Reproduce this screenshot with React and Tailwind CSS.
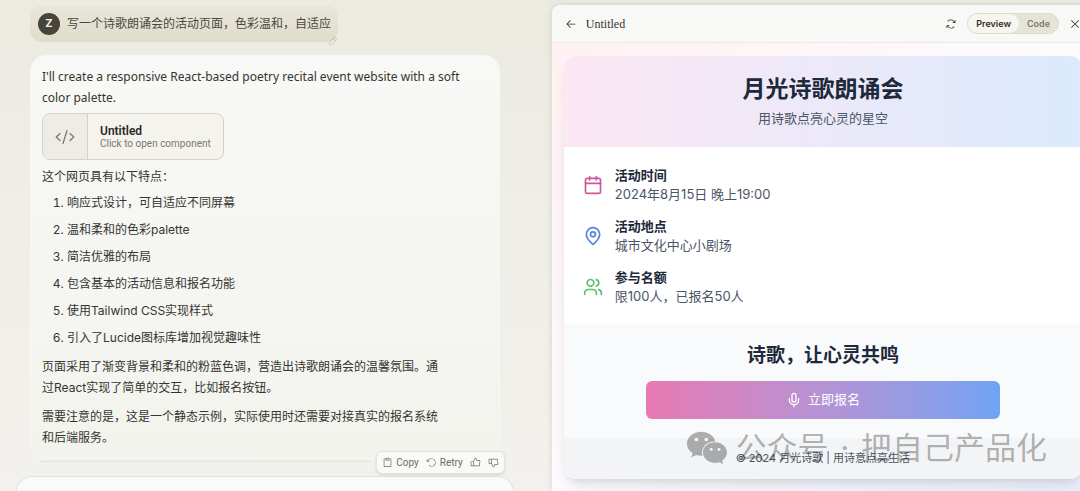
import React, { useState } from "react";
import { Calendar, MapPin, Mic, Users } from "lucide-react";
import {
  PiArrowLeft,
  PiArrowsClockwise,
  PiArrowCounterClockwise,
  PiClipboard,
  PiPencilSimple,
  PiThumbsUp,
  PiThumbsDown,
  PiX,
} from "react-icons/pi";
import { FaWeixin } from "react-icons/fa6";

const features = [
  "响应式设计，可自适应不同屏幕",
  "温和柔和的色彩palette",
  "简洁优雅的布局",
  "包含基本的活动信息和报名功能",
  "使用Tailwind CSS实现样式",
  "引入了Lucide图标库增加视觉趣味性",
];

const details = [
  {
    icon: Calendar,
    color: "text-[#d0579a]",
    title: "活动时间",
    value: "2024年8月15日 晚上19:00",
  },
  {
    icon: MapPin,
    color: "text-[#5585e0]",
    title: "活动地点",
    value: "城市文化中心小剧场",
  },
  {
    icon: Users,
    color: "text-[#5cc168]",
    title: "参与名额",
    value: "限100人，已报名50人",
  },
];

function UserMessage() {
  return (
    <div className="relative flex items-center gap-[7px] self-start rounded-xl bg-gradient-to-b from-[#e9e7db] to-[#dfdccb] py-[7px] pr-[7px] pl-2 text-[#4a493f]">
      <span className="flex size-[22px] items-center justify-center rounded-full bg-[#47443a] text-[11px] font-bold text-[#f5f3ea]">
        Z
      </span>
      <p className="text-[12px] leading-[23px]">
        写一个诗歌朗诵会的活动页面，色彩温和，自适应
      </p>
      <button
        type="button"
        aria-label="Edit"
        className="absolute right-0 -bottom-1 text-[#c4c1b3]"
      >
        <PiPencilSimple size={10} />
      </button>
    </div>
  );
}

function ComponentCard() {
  return (
    <button
      type="button"
      className="mt-[5px] mb-[6px] flex h-[47px] overflow-hidden rounded-lg border border-[#d3d1c9] bg-[#f4f3ee] text-left"
    >
      <span className="flex w-[45px] items-center justify-center self-stretch border-r border-[#d3d1c9] bg-[#eeece4] text-[#77756d]">
        <svg
          viewBox="0 0 20 16"
          className="w-5"
          fill="none"
          stroke="currentColor"
          strokeWidth="1.2"
          strokeLinecap="round"
          strokeLinejoin="round"
        >
          <path d="M5 4.5 1.2 8 5 11.5M15 4.5 18.8 8 15 11.5M12 1.5 8 14.5" />
        </svg>
      </span>
      <span className="flex flex-col justify-center self-stretch px-3 font-[Roboto,sans-serif]">
        <span className="text-[12px] leading-[14px] font-semibold text-[#2b2a26]">
          Untitled
        </span>
        <span className="text-[10px] leading-[12px] text-[#7a7971]">
          Click to open component
        </span>
      </span>
    </button>
  );
}

function AssistantMessage() {
  return (
    <div className="relative mt-[13px] rounded-2xl border border-[#f8f7f3] bg-gradient-to-b from-[#f8f8f6] to-[#f3f3ee] px-[11px] py-[10px] text-[12px] leading-[21px] text-[#35352f]">
      <p className="font-['Noto_Sans',sans-serif]">
        I'll create a responsive React-based poetry recital event website with a
        soft
        <br />
        color palette.
      </p>
      <ComponentCard />
      <p>这个网页具有以下特点：</p>
      <ol className="mt-[5px] list-decimal space-y-[6px] pl-[25px]">
        {features.map((f) => (
          <li key={f}>{f}</li>
        ))}
      </ol>
      <p className="mt-2">
        页面采用了渐变背景和柔和的粉蓝色调，营造出诗歌朗诵会的温馨氛围。通
        <br />
        过React实现了简单的交互，比如报名按钮。
      </p>
      <p className="mt-2">
        需要注意的是，这是一个静态示例，实际使用时还需要对接真实的报名系统
        <br />
        和后端服务。
      </p>

      {/* Message actions */}
      <div className="absolute -right-[6px] -bottom-4 flex h-[23px] items-center gap-[7px] rounded-md border border-[#e4e3dd] bg-[#f9f9f7] px-[5px] font-[Roboto,sans-serif] text-[10px] text-[#6d6c65] shadow-sm">
        <button type="button" className="flex items-center gap-[3px]">
          <PiClipboard size={11} />
          Copy
        </button>
        <button type="button" className="flex items-center gap-[3px]">
          <PiArrowCounterClockwise size={11} />
          Retry
        </button>
        <button type="button" aria-label="Good response">
          <PiThumbsUp size={11} />
        </button>
        <button type="button" aria-label="Bad response">
          <PiThumbsDown size={11} />
        </button>
      </div>
    </div>
  );
}

function Chat() {
  return (
    <section className="mr-px flex w-[51%] shrink-0 flex-col pt-[5px]">
      <div className="flex flex-col pr-[51px] pl-[30px]">
        <UserMessage />
        <AssistantMessage />
        <div className="mt-[2px] mr-32 ml-[10px] border-t border-[#e4e3dc]" />
      </div>
      <div className="mt-[14px] mr-[37px] ml-4 h-20 shrink-0 rounded-t-2xl border border-b-0 border-[#e2e1db] bg-[#fafaf9]" />
    </section>
  );
}

function PreviewHeader() {
  const [tab, setTab] = useState("preview");
  const active = "bg-[#f6f5ee] text-[#2f2e29]";
  const idle = "text-[#7b7969]";

  return (
    <header className="flex h-[38px] shrink-0 items-center border-b border-[#ebeae6] bg-[#f8f8f6] px-[13px] text-[#33322d]">
      <button type="button" aria-label="Back">
        <PiArrowLeft size={12} />
      </button>
      <h2 className="ml-[9px] font-['Liberation_Serif',serif] text-[12px]">
        Untitled
      </h2>
      <button type="button" aria-label="Refresh" className="mr-[10px] ml-auto">
        <PiArrowsClockwise size={12} />
      </button>
      <div className="mr-[10px] flex h-[21px] rounded-full border border-[#dedccb] bg-[#e6e4d6] text-[9px] font-semibold">
        <button
          type="button"
          onClick={() => setTab("preview")}
          className={`rounded-full px-2 ${tab === "preview" ? active : idle}`}
        >
          Preview
        </button>
        <button
          type="button"
          onClick={() => setTab("code")}
          className={`rounded-full px-2 ${tab === "code" ? active : idle}`}
        >
          Code
        </button>
      </div>
      <button type="button" aria-label="Close">
        <PiX size={12} />
      </button>
    </header>
  );
}

function EventPage() {
  return (
    <div className="relative flex-1 bg-gradient-to-br from-[#fff1f2] via-[#fdfbfd] to-[#eaf1fd] px-3 pt-[13px]">
      <div className="overflow-hidden rounded-xl bg-white text-center shadow-lg">
        <div className="h-[91px] bg-gradient-to-r from-pink-100 to-blue-100 pt-4">
          <h1 className="text-[23px] leading-[34px] font-bold text-gray-800">
            月光诗歌朗诵会
          </h1>
          <p className="mt-[3px] text-[13px] leading-[19px] text-gray-600">
            用诗歌点亮心灵的星空
          </p>
        </div>

        <div className="space-y-[13px] pt-[19px] pr-5 pb-[18px] pl-[19px] text-left">
          {details.map(({ icon: Icon, color, title, value }) => (
            <div key={title} className="flex items-center gap-3">
              <Icon size={20} className={color} />
              <div className="text-[13px] leading-[19px]">
                <h3 className="font-bold text-gray-800">{title}</h3>
                <p className="text-gray-600">{value}</p>
              </div>
            </div>
          ))}
        </div>

        <div className="bg-gray-50 px-5 py-[19px]">
          <h2 className="text-[19px] leading-[25px] font-bold text-gray-800">
            诗歌，让心灵共鸣
          </h2>
          <button
            type="button"
            className="mx-auto mt-[13px] flex h-[38px] w-full max-w-[354px] items-center justify-center gap-[6px] rounded-md bg-gradient-to-r from-[#e879b3] to-[#6fa3f4] text-[13px] text-white"
          >
            <Mic size={16} />
            立即报名
          </button>
        </div>

        <footer className="bg-gray-100 py-3 text-[11px] leading-[17px] text-gray-600">
          © 2024 月光诗歌 | 用诗意点亮生活
        </footer>
      </div>

      {/* Account watermark over the card */}
      <div className="pointer-events-none absolute right-[47px] bottom-[22px] flex items-center gap-2 text-[31px] leading-[36px] whitespace-nowrap text-black/30">
        <FaWeixin size={42} />
        <p>
          公众号<span className="mx-[3px]"> · </span>把自己产品化
        </p>
      </div>
    </div>
  );
}

export default function App() {
  return (
    <main className="flex h-screen overflow-hidden bg-gradient-to-b from-[#ecebe2] to-[#f2f1ed] font-[Inter,'Noto_Sans_CJK_SC',sans-serif]">
      <Chat />
      <section className="mt-[5px] -mr-[14px] flex min-w-0 flex-1 flex-col overflow-hidden rounded-tl-lg shadow-[0_0_6px_rgba(0,0,0,0.12)]">
        <PreviewHeader />
        <EventPage />
      </section>
    </main>
  );
}
